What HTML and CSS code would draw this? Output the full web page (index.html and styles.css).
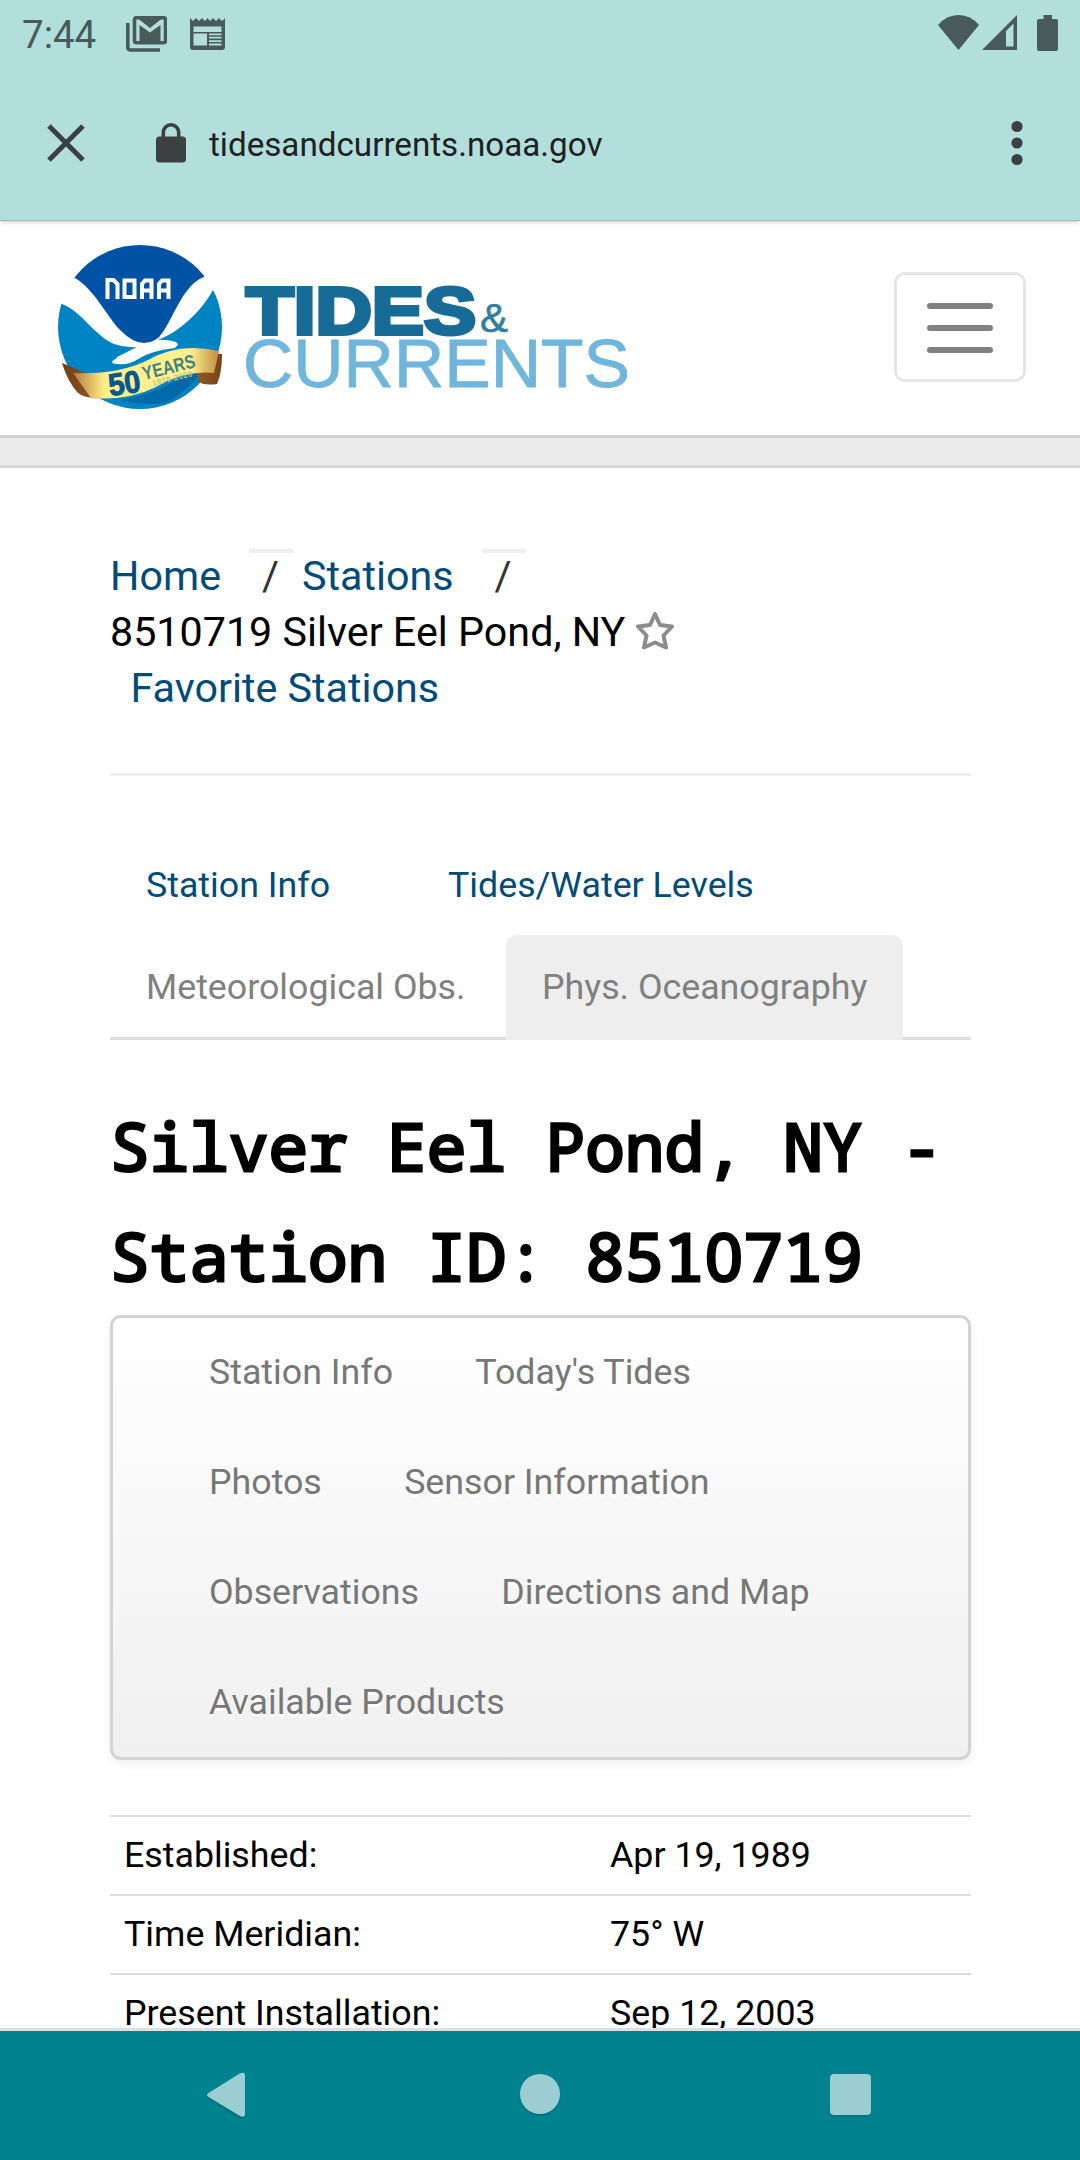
FILE: index.html
```html
<!DOCTYPE html>
<html lang="en">
<head>
<meta charset="utf-8">
<title>Silver Eel Pond, NY - Station Home Page</title>
<link rel="stylesheet" href="styles.css">
</head>
<body>
<div class="phone">
  <header class="chrome">
    <div class="status">
      <span class="clock">7:44</span>
      <svg class="ico-mail" viewBox="0 0 41 36"><path d="M1.8 7v24q0 3 3 3H34" fill="none" stroke="#485a59" stroke-width="3.6"/><rect x="8.5" y="1.7" width="31" height="25" rx="2" fill="none" stroke="#485a59" stroke-width="3.6"/><path d="M10 1h28L24 12 10 1zM13.5 9l10.500 7.500L34.500 9v16.500h-21z" fill="#485a59"/></svg>
      <svg class="ico-news" viewBox="0 0 35 32"><path fill="#485a59" fill-rule="evenodd" d="M0 0l3 3 3-3 3 3 3-3 3 3 2.500-3 2.500 3 3-3 3 3 3-3 3 3 3-3v29q0 3-3 3H3q-3 0-3-3zM3.500 8.500v5.500h28V8.500zM3.500 15.500v12h13.500v-12zM19 15.500v1.800h12.500v-1.800zM19 18.800v1.800h12.500v-1.800zM19 22.200v1.800h12.500v-1.800zM19 25.600v1.800h12.500v-1.800z"/></svg>
      <span class="spacer"></span>
      <svg class="ico-wifi" viewBox="0 0 41 35"><path fill="#485a59" d="M0 10Q8.500 0 20.500 0T41 10L20.500 35z"/></svg>
      <svg class="ico-signal" viewBox="0 0 35 35"><path fill="#485a59" fill-rule="evenodd" d="M0 35L35 0v35zM24 16v15.500h7.500V8.500z"/></svg>
      <svg class="ico-battery" viewBox="0 0 21 36"><path fill="#485a59" d="M6.500 0h8.500v4h4q2 0 2 2v28q0 2-2 2H2q-2 0-2-2V6q0-2 2-2h4.500z"/></svg>
    </div>
    <div class="toolbar">
      <svg class="ico-close" viewBox="0 0 38 38"><path d="M2 2l34 34M36 2L2 36" stroke="#3c4043" stroke-width="5"/></svg>
      <svg class="ico-lock" viewBox="0 0 30 40"><path d="M7.300 15V9.500a7.700 7.700 0 0 1 15.400 0V15" fill="none" stroke="#3c4043" stroke-width="3.600"/><rect y="13.500" width="30" height="26" rx="3.500" fill="#3c4043"/></svg>
      <span class="url">tidesandcurrents.noaa.gov</span>
      <span class="spacer"></span>
      <svg class="ico-more" viewBox="0 0 12 46"><g fill="#3c4043"><circle cx="6" cy="6.500" r="5.600"/><circle cx="6" cy="23" r="5.600"/><circle cx="6" cy="39.500" r="5.600"/></g></svg>
    </div>
  </header>

  <nav class="navbar">
    <svg class="logo" viewBox="0 0 580 166">
      <defs>
        <clipPath id="disc"><circle cx="83" cy="83" r="82"/></clipPath>
        <linearGradient id="gold"><stop offset="0" stop-color="#b77a35"/><stop offset=".22" stop-color="#fff08c"/><stop offset=".8" stop-color="#fdf192"/><stop offset="1" stop-color="#c28c42"/></linearGradient>
        <linearGradient id="bronze"><stop offset="0" stop-color="#6d3d16"/><stop offset=".5" stop-color="#c28444"/><stop offset="1" stop-color="#7a4315"/></linearGradient>
      </defs>
      <g clip-path="url(#disc)">
        <rect width="166" height="166" fill="#fff"/>
        <path fill="#0053a4" d="M8 44Q15 34 18 34C37 45 51 74 63 86Q76 99 87 99Q99 99 106 88C117 72 127 40 147 33L150 0H8z"/>
        <path fill="#0083c3" d="M0 56L5 60C24 67 38 92 57 100Q68 104 80 103L60 113l-3 6q12 3 24-4 12-8 37-11l2-5q-8-4-20-3C120 90 144 68 156 46L170 60V166H0z"/>
        <path fill="#fff" d="M78 105Q90 98 103 97q15-1 18 3 0 4-10 4-15 1-30 11-12 8-26 4 0-5 13-6z"/>
      </g>
      <path fill="#0069aa" d="M64 156q33-5 62-24l18-4q-18 25-38 31-18 3-42-3z"/>
      <path fill="url(#bronze)" d="M5 119l26 11 13 24q-17 1-24-6Q10 136 5 119zM137 109l28 1q0 19-5 30-14 2-19-3z"/>
      <path fill="url(#gold)" d="M16 129Q59 131 89 117 121 98 162 107L157 129Q127 126 99 143 71 157 34 154z"/>
      <g font-family="Liberation Sans" font-weight="bold">
        <text x="53" y="152" font-size="31" textLength="32" lengthAdjust="spacingAndGlyphs" fill="#07568c" stroke="#07568c" stroke-width="1" transform="rotate(-8 53 152)">50</text>
        <text x="87" y="136" font-size="19" textLength="54" lengthAdjust="spacingAndGlyphs" fill="#47817f" transform="rotate(-14 87 136)">YEARS</text>
        <text x="96" y="142" font-size="8" textLength="41" fill="#c5c474" transform="rotate(-14 96 142)">1970-2020</text>
      </g>
      <g fill="none" stroke="#fff" stroke-width="4"><path d="M50.500 55V36h6l4 4v15M67.500 36.500h10v16.500h-10zM85 55V40l3-3.500h6.500V55M85 46.500h9.500M102 55V40l3-3.500h6.500V55M102 46.500h9.500"/></g>
      <text x="189" y="89.500" font-family="Liberation Sans" font-weight="bold" font-size="67" textLength="230" lengthAdjust="spacingAndGlyphs" fill="#176b97" stroke="#176b97" stroke-width="4">TIDES</text>
      <text x="423" y="87.500" font-family="Liberation Sans" font-size="41" textLength="28" lengthAdjust="spacingAndGlyphs" fill="#337d9c" stroke="#337d9c" stroke-width=".6">&amp;</text>
      <text x="186" y="142.500" font-family="Liberation Sans" font-size="69" textLength="387" lengthAdjust="spacingAndGlyphs" fill="#6fb5dc" stroke="#6fb5dc" stroke-width=".8">CURRENTS</text>
    </svg>
    <div class="toggler"><i></i><i></i><i></i></div>
  </nav>
  <div class="strip"></div>

  <main class="content">
    <div class="crumbs">
      <div class="crumb-row"><a>Home</a><span class="sep sep-home">/</span><a>Stations</a><span class="sep sep-stations">/</span></div>
      <div class="crumb-row">8510719 Silver Eel Pond, NY
        <svg class="ico-star" viewBox="0 0 38 38"><path d="M19 2l5 11 12 1.500-8.500 9L30 35.500 19 30.500 8 35.500l2.500-12L2 14.500 14 13z" fill="none" stroke="#8c8c8c" stroke-width="4" stroke-linejoin="round"/></svg>
      </div>
      <div class="crumb-row fav"><a>Favorite Stations</a></div>
    </div>

    <div class="tabs">
      <div class="tab-row"><a class="tab first">Station Info</a><a class="tab">Tides/Water Levels</a></div>
      <div class="tab-row muted"><a class="tab met">Meteorological Obs.</a><a class="tab active">Phys. Oceanography</a></div>
    </div>

    <h1>Silver Eel Pond, NY -<br>Station ID: 851<span class="zero">0</span>719</h1>

    <div class="subnav">
      <div class="sub-row"><a>Station Info</a><a>Today's Tides</a></div>
      <div class="sub-row"><a>Photos</a><a>Sensor Information</a></div>
      <div class="sub-row"><a>Observations</a><a>Directions and Map</a></div>
      <div class="sub-row"><a>Available Products</a></div>
    </div>

    <div class="facts">
      <div class="fact"><span>Established:</span><span>Apr 19, 1989</span></div>
      <div class="fact"><span>Time Meridian:</span><span>75° W</span></div>
      <div class="fact"><span>Present Installation:</span><span>Sep 12, 2003</span></div>
    </div>
  </main>

  <footer class="sysnav">
    <svg class="nav-back" viewBox="0 0 40 46"><path d="M2.500 21L34 1.300Q39 -.5 39 3V42q0 4-5 2L2.500 25q-3-2 0-4z" fill="#9bcdd2"/></svg>
    <span class="nav-home"></span>
    <span class="nav-recent"></span>
  </footer>
</div>
</body>
</html>
```
FILE: styles.css
```css
* { box-sizing: border-box; }
body { margin: 0; background: #fff; }
.phone {
  display: flex; flex-direction: column;
  width: 1080px; height: 2160px; overflow: hidden;
  font-family: Roboto, sans-serif; font-size: 35.75px; color: #000;
}
.phone svg { display: block; flex: none; }
.spacer { flex: 1; }

.chrome {
  flex: none; height: 221px; background: #b2dfdb;
  border-bottom: 1px solid #b3b5b5; box-shadow: 0 1px 4px rgba(0,0,0,.22);
}
.status { display: flex; align-items: flex-start; height: 66px; padding: 0 22px; color: #485a59; }
.clock { width: 104px; padding-top: 12px; font-size: 38.5px; line-height: 46px; }
.ico-mail { width: 41px; height: 36px; margin-top: 16px; }
.ico-news { width: 35px; height: 32px; margin: 18px 0 0 23px; }
.ico-wifi { width: 41px; height: 35px; margin-top: 15px; }
.ico-signal { width: 35px; height: 35px; margin: 15px 0 0 3px; }
.ico-battery { width: 21px; height: 36px; margin: 15px 0 0 20px; }
.toolbar { display: flex; align-items: center; height: 154px; padding: 0 57px 0 47px; color: #202124; }
.ico-close { width: 38px; height: 38px; }
.ico-lock { width: 30px; height: 40px; margin-left: 71px; }
.url { margin: 3px 0 0 23px; font-size: 33.2px; line-height: 44px; }
.ico-more { width: 12px; height: 46px; }

.navbar {
  display: flex; flex: none; align-items: flex-start; justify-content: space-between;
  height: 214px; padding: 22px 54px 0 57px;
}
.logo { width: 580px; height: 166px; margin-top: 1px; }
.toggler {
  display: flex; flex-direction: column; justify-content: center; align-items: center; gap: 16px;
  width: 132px; height: 110px; margin-top: 29px; padding-top: 2px;
  border: 3px solid #e6e6e6; border-radius: 11px;
}
.toggler i { width: 66px; height: 6px; border-radius: 3px; background: #808080; }
.strip { flex: none; height: 33px; background: #ebebeb; border-top: 3px solid #d0d0d0; border-bottom: 3px solid #d8d8d8; }

.content { flex: none; height: 1560px; padding: 80px 109px 0 110px; overflow: hidden; }
.crumbs { height: 228px; border-bottom: 3px solid #eee; font-size: 41.25px; line-height: 56px; }
.crumb-row { display: flex; height: 56px; white-space: nowrap; }
.crumbs a { color: #004b7a; }
.sep { border-top: 4px solid #eee; height: 60px; margin-top: 1px; line-height: 47px; color: #333; width: 44px; padding-left: 13px; }
.crumb-row:first-child { align-items: flex-start; }
.sep-home { margin-left: 28px; margin-right: 9px; }
.sep-stations { margin-left: 28px; }
.ico-star { width: 38px; height: 38px; margin: 8px 0 0 11px; }
.fav { padding-left: 20.500px; }

.tabs { display: flex; flex-direction: column; height: 264px; padding-top: 57px; border-bottom: 3px solid #ddd; }
.tab-row { display: flex; height: 102px; line-height: 104px; color: #004b7a; white-space: nowrap; }
.muted { color: #808080; }
.tab { padding: 0 36px; }
.first { width: 302px; }
.met { width: 396px; }
.active { width: 397px; height: 105px; background: #eee; border-radius: 11px 11px 0 0; }

h1 {
  height: 275px; margin: 0; padding-top: 50px;
  font: 400 66px/110px "Noto Sans Mono", "DejaVu Sans Mono", monospace;
  -webkit-text-stroke: 3px #000; white-space: nowrap;
}
/* plain, unslashed zero in a monospace cell */
.zero { display: inline-block; width: 39.6px; text-align: center; font-family: "Noto Sans", sans-serif; line-height: 1; }

.subnav {
  height: 445px; border: 3px solid #d3d3d3; border-radius: 11px;
  background: linear-gradient(#fff, #f0f0f0); box-shadow: 0 3px 11px rgba(0,0,0,.07);
  color: #777; text-shadow: 0 3px 0 #fff;
}
.sub-row { display: flex; gap: 82.300px; height: 110px; padding-left: 96px; line-height: 108px; white-space: nowrap; }

.facts { margin-top: 55px; }
.fact { display: grid; grid-template-columns: 486px 1fr; height: 79px; padding-left: 14px; border-top: 2px solid #ddd; line-height: 76px; }

.sysnav {
  display: flex; flex: none; align-items: flex-start; justify-content: space-between;
  height: 132px; padding: 41px 209px 0 206px;
  background: #00838f; border-top: 3px solid #dfdfdf;
}
.nav-back { width: 40px; height: 46px; filter: drop-shadow(0 2px 1px rgba(0,0,0,.15)); }
.nav-home { width: 40px; height: 40px; margin: 2px 0 0 4px; border-radius: 50%; background: #9bcdd2; box-shadow: 0 2px 2px rgba(0,0,0,.15); }
.nav-recent { width: 41px; height: 41px; margin-top: 2px; border-radius: 4px; background: #9bcdd2; box-shadow: 0 2px 2px rgba(0,0,0,.15); }
```
